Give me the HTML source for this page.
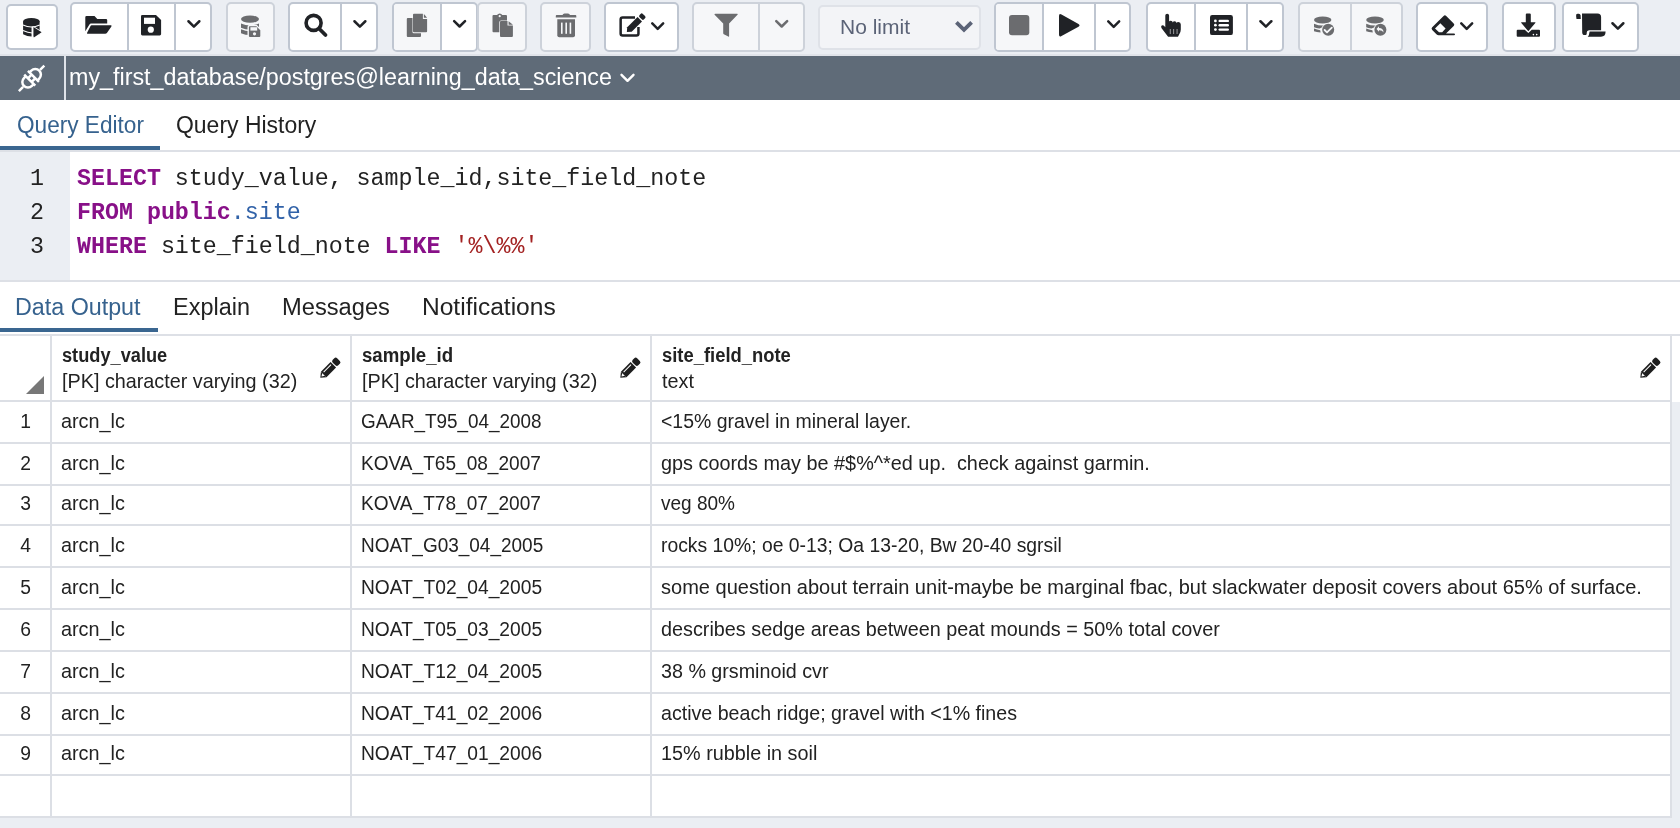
<!DOCTYPE html>
<html><head><meta charset="utf-8">
<style>
*{box-sizing:border-box;margin:0;padding:0}
html,body{width:1680px;height:828px;overflow:hidden;background:#ebeef3;font-family:"Liberation Sans",sans-serif;color:#222}
.abs{position:absolute}
#toolbar{position:absolute;left:0;top:0;width:1680px;height:54px;background:#ebeef3}
.tb{position:absolute;top:2px;height:50px;border:2px solid #bfc6d1;border-radius:5px;background:#fff;overflow:hidden}
.tb.dis{background:#f6f7f9;border-color:#cdd2da}
.sep{position:absolute;top:0;bottom:0;width:2px;background:#bfc6d1}
.tb.dis .sep{background:#cdd2da}
.tb svg{position:absolute}
#tbline{position:absolute;left:0;top:54px;width:1680px;height:2px;background:#e1e4ea}
#conn{position:absolute;left:0;top:56px;width:1680px;height:44px;background:#5f6b78}
#connsep{position:absolute;left:64px;top:56px;width:2px;height:44px;background:#dfe3e9}
#conntxt{position:absolute;left:69px;top:56px;height:44px;line-height:42px;font-size:23.3px;color:#fff;white-space:nowrap}
#tabs1{position:absolute;left:0;top:100px;width:1680px;height:52px;background:#fff}
.tab{position:absolute;font-size:23px;white-space:nowrap;color:#222;transform-origin:0 0}
.tab.act{color:#36628e}
.uline{position:absolute;height:4px;background:#3a6690}
.hline{position:absolute;left:0;width:1680px;height:2px;background:#dde0e6}
#gutter{position:absolute;left:0;top:152px;width:70px;height:128px;background:#ebeef3}
#editor{position:absolute;left:70px;top:152px;width:1610px;height:128px;background:#fff}
.ln{position:absolute;left:0;width:44px;text-align:right;font-family:"Liberation Mono",monospace;font-size:23.3px;color:#222}
.code{position:absolute;left:77px;font-family:"Liberation Mono",monospace;font-size:23.3px;color:#222;white-space:pre}
.kw{color:#881088;font-weight:bold}
.bl{color:#3162a8}
.st{color:#a32222}
#tabs2{position:absolute;left:0;top:282px;width:1680px;height:53px;background:#fff}
#grid{position:absolute;left:0;top:336px;width:1680px;height:482px;background:#fff}
.gh{position:absolute;left:0;height:2px;background:#dcdfe5}
.gv{position:absolute;width:2px;background:#dcdfe5}
.cell{position:absolute;transform-origin:0 0;font-size:19.3px;white-space:nowrap;color:#222}
.rn{position:absolute;left:0;width:51px;text-align:center;font-size:19.3px;color:#222}
.hn{position:absolute;font-size:20px;font-weight:bold;color:#222;white-space:nowrap;transform:scaleX(0.896);transform-origin:0 0}
.ht{position:absolute;font-size:19.8px;color:#222;white-space:nowrap}
</style></head><body>
<div id="root" style="position:absolute;left:0;top:0;width:1680px;height:828px;will-change:transform">
<div id="toolbar">
 <!-- 1 -->
 <div class="tb" style="left:6px;width:52px;top:4px;height:46px"></div>
 <!-- 2 -->
 <div class="tb" style="left:70px;width:142px"><div class="sep" style="left:54.5px"></div><div class="sep" style="left:102px"></div></div>
 <!-- 3 -->
 <div class="tb dis" style="left:226px;width:49px"></div>
 <!-- 4 -->
 <div class="tb" style="left:288px;width:90px"><div class="sep" style="left:50px"></div></div>
 <!-- 5 copy + dd -->
 <div class="tb" style="left:392px;width:86px;background:#fff"><div class="abs" style="left:0;top:0;width:46px;height:46px;background:#f6f7f9"></div><div class="sep" style="left:46px"></div></div>
 <div class="tb dis" style="left:477px;width:50px"></div>
 <!-- delete -->
 <div class="tb dis" style="left:540px;width:51px"></div>
 <!-- edit -->
 <div class="tb" style="left:604px;width:75px"></div>
 <!-- filter -->
 <div class="tb dis" style="left:692px;width:113px"><div class="sep" style="left:64px"></div></div>
 <!-- select -->
 <div class="abs" style="left:818px;top:4.5px;width:163px;height:45px;border:2px solid #dfe2e8;border-radius:5px;background:#f3f4f7"></div>
 <div class="abs" style="left:840px;top:14.9px;font-size:21px;color:#5b6377;white-space:nowrap">No limit</div>
 <!-- exec group -->
 <div class="tb" style="left:994px;width:137px"><div class="abs" style="left:0;top:0;width:46px;height:46px;background:#f6f7f9"></div><div class="sep" style="left:46px"></div><div class="sep" style="left:98px"></div></div>
 <!-- explain group -->
 <div class="tb" style="left:1146px;width:138px"><div class="sep" style="left:46px"></div><div class="sep" style="left:98px"></div></div>
 <!-- commit group -->
 <div class="tb dis" style="left:1298px;width:105px"><div class="sep" style="left:50px"></div></div>
 <!-- eraser -->
 <div class="tb" style="left:1416px;width:72px"></div>
 <!-- download -->
 <div class="tb" style="left:1502px;width:54px"></div>
 <!-- scroll -->
 <div class="tb" style="left:1562px;width:77px"></div>
</div>
<div id="tbline"></div>
<div id="conn"></div>
<div id="connsep"></div>
<div id="conntxt">my_first_database/postgres@learning_data_science</div>

<div id="tabs1">
 <div class="tab act" style="left:16.8px;top:11.5px;transform:scaleX(0.983)">Query Editor</div>
 <div class="tab" style="left:176.2px;top:11.5px;transform:scaleX(0.998)">Query History</div>
 <div class="uline" style="left:0;top:46px;width:160px"></div>
</div>
<div class="hline" style="top:150px"></div>
<div id="gutter"></div>
<div id="editor"></div>
<div class="ln" style="top:165.5px">1</div>
<div class="ln" style="top:199.5px">2</div>
<div class="ln" style="top:233.5px">3</div>
<div class="code" style="top:165.5px"><span class="kw">SELECT</span> study_value, sample_id,site_field_note</div>
<div class="code" style="top:199.5px"><span class="kw">FROM</span> <span class="kw">public</span><span class="bl">.site</span></div>
<div class="code" style="top:233.5px"><span class="kw">WHERE</span> site_field_note <span class="kw">LIKE</span> <span class="st">'%\%%'</span></div>
<div class="hline" style="top:280px"></div>

<div id="tabs2">
 <div class="tab act" style="left:15.4px;top:11.5px;transform:scaleX(1.012)">Data Output</div>
 <div class="tab" style="left:173.3px;top:11.5px;transform:scaleX(1.02)">Explain</div>
 <div class="tab" style="left:282px;top:11.5px;transform:scaleX(1.03)">Messages</div>
 <div class="tab" style="left:421.8px;top:11.5px;transform:scaleX(1.067)">Notifications</div>
 <div class="uline" style="left:0;top:46px;width:158px"></div>
</div>
<div class="hline" style="top:334px"></div>

<div id="grid">
<div class="gh" style="top:64px;width:1672px"></div>
<div class="gh" style="top:106px;width:1672px"></div>
<div class="gh" style="top:148px;width:1672px"></div>
<div class="gh" style="top:188px;width:1672px"></div>
<div class="gh" style="top:230px;width:1672px"></div>
<div class="gh" style="top:272px;width:1672px"></div>
<div class="gh" style="top:314px;width:1672px"></div>
<div class="gh" style="top:356px;width:1672px"></div>
<div class="gh" style="top:398px;width:1672px"></div>
<div class="gh" style="top:438px;width:1672px"></div>
<div class="gh" style="top:480px;width:1672px"></div>
<div class="gv" style="left:50px;top:0;height:482px"></div>
<div class="gv" style="left:350px;top:0;height:482px"></div>
<div class="gv" style="left:650px;top:0;height:482px"></div>
<div class="gv" style="left:1670px;top:0;height:482px"></div>
<div class="abs" style="left:1672px;top:66px;width:8px;height:426px;background:#ebeef3"></div>
<div class="hn" style="left:62px;top:8.0px;transform:scaleX(0.91)">study_value</div>
<div class="ht" style="left:62px;top:33.88px">[PK] character varying (32)</div>
<div class="hn" style="left:362px;top:8.0px;transform:scaleX(0.932)">sample_id</div>
<div class="ht" style="left:362px;top:33.88px">[PK] character varying (32)</div>
<div class="hn" style="left:662px;top:8.0px;transform:scaleX(0.92)">site_field_note</div>
<div class="ht" style="left:662px;top:33.88px">text</div>
<div class="rn" style="top:74.56px">1</div>
<div class="cell" style="left:61px;top:74.56px;transform:scaleX(1.028)">arcn_lc</div>
<div class="cell" style="left:361px;top:74.56px;transform:scaleX(0.9795)">GAAR_T95_04_2008</div>
<div class="cell" style="left:661px;top:74.56px;transform:scaleX(1.0086)">&lt;15% gravel in mineral layer.</div>
<div class="rn" style="top:116.86px">2</div>
<div class="cell" style="left:61px;top:116.86px;transform:scaleX(1.028)">arcn_lc</div>
<div class="cell" style="left:361px;top:116.86px;transform:scaleX(0.9891)">KOVA_T65_08_2007</div>
<div class="cell" style="left:661px;top:116.86px;transform:scaleX(1.0286)">gps coords may be #$%^*ed up.&nbsp; check against garmin.</div>
<div class="rn" style="top:156.96px">3</div>
<div class="cell" style="left:61px;top:156.96px;transform:scaleX(1.028)">arcn_lc</div>
<div class="cell" style="left:361px;top:156.96px;transform:scaleX(0.9891)">KOVA_T78_07_2007</div>
<div class="cell" style="left:661px;top:156.96px;transform:scaleX(0.9867)">veg 80%</div>
<div class="rn" style="top:198.76px">4</div>
<div class="cell" style="left:61px;top:198.76px;transform:scaleX(1.028)">arcn_lc</div>
<div class="cell" style="left:361px;top:198.76px;transform:scaleX(0.9845)">NOAT_G03_04_2005</div>
<div class="cell" style="left:661px;top:198.76px;transform:scaleX(1.0026)">rocks 10%; oe 0-13; Oa 13-20, Bw 20-40 sgrsil</div>
<div class="rn" style="top:240.76px">5</div>
<div class="cell" style="left:61px;top:240.76px;transform:scaleX(1.028)">arcn_lc</div>
<div class="cell" style="left:361px;top:240.76px;transform:scaleX(0.9957)">NOAT_T02_04_2005</div>
<div class="cell" style="left:661px;top:240.76px;transform:scaleX(1.0388)">some question about terrain unit-maybe be marginal fbac, but slackwater deposit covers about 65% of surface.</div>
<div class="rn" style="top:282.76px">6</div>
<div class="cell" style="left:61px;top:282.76px;transform:scaleX(1.028)">arcn_lc</div>
<div class="cell" style="left:361px;top:282.76px;transform:scaleX(0.9957)">NOAT_T05_03_2005</div>
<div class="cell" style="left:661px;top:282.76px;transform:scaleX(1.0273)">describes sedge areas between peat mounds = 50% total cover</div>
<div class="rn" style="top:324.76px">7</div>
<div class="cell" style="left:61px;top:324.76px;transform:scaleX(1.028)">arcn_lc</div>
<div class="cell" style="left:361px;top:324.76px;transform:scaleX(0.9957)">NOAT_T12_04_2005</div>
<div class="cell" style="left:661px;top:324.76px;transform:scaleX(1.0214)">38 % grsminoid cvr</div>
<div class="rn" style="top:366.76px">8</div>
<div class="cell" style="left:61px;top:366.76px;transform:scaleX(1.028)">arcn_lc</div>
<div class="cell" style="left:361px;top:366.76px;transform:scaleX(0.9957)">NOAT_T41_02_2006</div>
<div class="cell" style="left:661px;top:366.76px;transform:scaleX(1.0172)">active beach ridge; gravel with &lt;1% fines</div>
<div class="rn" style="top:406.86px">9</div>
<div class="cell" style="left:61px;top:406.86px;transform:scaleX(1.028)">arcn_lc</div>
<div class="cell" style="left:361px;top:406.86px;transform:scaleX(0.9957)">NOAT_T47_01_2006</div>
<div class="cell" style="left:661px;top:406.86px;transform:scaleX(1.0272)">15% rubble in soil</div>
</div>
<svg id="ov" width="1680" height="828" viewBox="0 0 1680 828" style="position:absolute;left:0;top:0;pointer-events:none">
<defs>
 <path id="chev" d="M0,0 L5.45,5.45 L10.9,0" fill="none" stroke-width="2.5" stroke-linecap="round" stroke-linejoin="round"/>
</defs>
<!-- 1 db+play -->
<g fill="#202226">
 <path d="M23.1,21.5 V34.2 Q31.4,38.6 39.6,34.2 V21.5Z"/>
 <ellipse cx="31.4" cy="21.5" rx="8.3" ry="3.4"/>
 <path d="M23,25.1 Q31.4,29 39.7,25.1 M23,30.4 Q28,32.7 32.3,33" fill="none" stroke="#fff" stroke-width="1.1"/>
 <path d="M32.3,26.5 V38.5" stroke="#fff" stroke-width="1.5"/>
 <path d="M33.3,26 L43.2,32.3 L33.3,38.6Z" fill="#fff"/>
 <path d="M33.6,27.6 Q33.6,27 34.2,27.4 L41.3,32 Q41.7,32.3 41.3,32.6 L34.2,37.2 Q33.6,37.6 33.6,37Z"/>
</g>
<!-- folder -->
<g fill="#202226">
 <path d="M86.5,16 H94.5 L97.3,18.9 H106 Q107.2,18.9 107.2,20.1 V23.6 H91.2 Q89.9,23.6 89.3,24.8 L85.3,31.3 V17.2 Q85.3,16 86.5,16Z"/>
 <path d="M91.7,25.3 H110.8 Q112,25.3 111.4,26.4 L106.9,33 Q106.3,33.8 105.2,33.8 H87.6 Q86.6,33.8 87.1,32.8 L90.4,26.2 Q90.8,25.3 91.7,25.3Z"/>
</g>
<!-- save -->
<g fill="#202226">
 <path d="M142.3,15 H156 L161.1,20.1 V34 Q161.1,35.4 159.7,35.4 H142.3 Q141,35.4 141,34 V16.3 Q141,15 142.3,15Z"/>
 <rect x="144" y="17.7" width="11" height="6.2" fill="#fff"/>
 <circle cx="150.8" cy="29.7" r="3.1" fill="#fff"/>
</g>
<use href="#chev" x="188.45" y="21.25" stroke="#202226"/>
<!-- db save disabled -->
<g fill="#6b6c6f">
 <ellipse cx="250" cy="19.1" rx="9" ry="3.6"/>
 <path d="M241,23.4 Q250,27.6 259,23.4 V27.8 Q250,31.8 241,27.8Z"/>
 <path d="M241,29.3 Q250,33.3 259,29.3 V33.2 Q250,37 241,33.2Z"/>
 <path d="M248.5,25.6 H256.6 L261,30 V36 Q261,37.6 259.4,37.6 H250 Q248.2,37.6 248.2,36 V27 Q248.2,25.6 249.6,25.6Z" stroke="#f6f7f9" stroke-width="1.4"/>
 <rect x="250.4" y="27.2" width="6.8" height="3.4" fill="#f6f7f9"/>
 <circle cx="254.5" cy="33.8" r="1.6" fill="#f6f7f9"/>
</g>
<!-- search -->
<g fill="none" stroke="#202226">
 <circle cx="313.6" cy="22.9" r="7.5" stroke-width="3.6"/>
 <path d="M319.5,29 L325.5,35" stroke-width="3.8" stroke-linecap="round"/>
</g>
<use href="#chev" x="354.45" y="21.25" stroke="#202226"/>
<!-- copy -->
<g fill="#6b6c6f">
 <path d="M407.8,18 H412.5 V32 Q412.5,33.3 413.8,33.3 H421 V36 Q421,37 420,37 H407.8 Q406.8,37 406.8,36 V19 Q406.8,18 407.8,18Z"/>
 <path d="M414,13.7 H422.9 V19 H427.1 V31.3 Q427.1,32.3 426.1,32.3 H414 Q413,32.3 413,31.3 V14.7 Q413,13.7 414,13.7Z"/>
 <path d="M423.9,13.9 L427.1,17.8 H423.9Z"/>
</g>
<use href="#chev" x="454.15" y="21.05" stroke="#202226"/>
<!-- paste -->
<g fill="#6b6c6f">
 <path d="M493.5,15 H497 Q498,13.5 499.7,13.5 Q501.4,13.5 502.3,15 H506 Q507,15 507,16 V20.5 H501 Q499.3,20.5 499.3,22.2 V32.3 H493.5 Q492.5,32.3 492.5,31.3 V16 Q492.5,15 493.5,15Z"/>
 <circle cx="499.7" cy="16.2" r="1.1" fill="#f6f7f9"/>
 <path d="M501,21 H507.5 V25.6 H512.9 V36 Q512.9,37 511.9,37 H501 Q500,37 500,36 V22 Q500,21 501,21Z"/>
 <path d="M508.6,21.2 L512.9,24.7 H508.6Z"/>
</g>
<!-- trash -->
<g fill="#6b6c6f">
 <path d="M562.5,15.1 Q563,13.4 564.5,13.4 H568 Q569.5,13.4 570,15.1 H575.5 Q576.3,15.1 576.3,15.9 V17.6 H555.8 V15.9 Q555.8,15.1 556.6,15.1Z"/>
 <path d="M557.3,19.3 H575 V35.2 Q575,37.2 573,37.2 H559.3 Q557.3,37.2 557.3,35.2Z"/>
 <rect x="561" y="22.6" width="1.6" height="11.2" fill="#f6f7f9"/>
 <rect x="565.4" y="22.6" width="1.6" height="11.2" fill="#f6f7f9"/>
 <rect x="569.6" y="22.6" width="1.6" height="11.2" fill="#f6f7f9"/>
</g>
<!-- edit -->
<path d="M635,17.45 H622.6 Q620.65,17.45 620.65,19.4 V33.5 Q620.65,35.45 622.6,35.45 H636.5 Q638.45,35.45 638.45,33.5 V27" fill="none" stroke="#202226" stroke-width="2.5"/>
<g transform="translate(629.45,29.5) rotate(-45)" fill="#202226">
 <path d="M-3.7,0 L0,-3.15 H14.6 V3.15 H0Z"/>
 <rect x="15.9" y="-3.15" width="4.6" height="6.3" rx="1.6"/>
</g>
<use href="#chev" x="652.25" y="23.45" stroke="#202226"/>
<!-- filter -->
<g fill="#6b6c6f">
 <path d="M715.5,13.7 H737 Q738.4,13.7 737.5,14.8 L729.1,23.6 V36.2 Q729.1,37 728.3,36.6 L723.8,34.2 Q723.2,33.8 723.2,33 V23.6 L714.6,14.8 Q713.9,13.7 715.5,13.7Z"/>
</g>
<use href="#chev" x="776.25" y="21.05" stroke="#6b6c6f"/>
<!-- select chevron -->
<path d="M956.4,22.3 L964,29.9 L971.6,22.3" fill="none" stroke="#5b6377" stroke-width="3.8" stroke-linecap="butt" stroke-linejoin="miter"/>
<!-- stop -->
<rect x="1009" y="15.1" width="20.3" height="20.2" rx="3" fill="#6b6c6f"/>
<!-- play -->
<path d="M1061.5,14.5 Q1059,13 1059,16 V34.5 Q1059,37.5 1061.5,36 L1078.5,26.8 Q1080.6,25.4 1078.5,24 Z" fill="#202226"/>
<use href="#chev" x="1108.25" y="21.35" stroke="#202226"/>
<!-- hand -->
<g fill="#202226">
 <path d="M1165.3,15.5 Q1165.3,13.8 1167.2,13.8 Q1169.1,13.8 1169.1,15.5 V21.6 Q1169.3,20.8 1170.8,20.8 Q1172.6,20.8 1172.8,22.4 Q1173,21.3 1174.6,21.3 Q1176.4,21.3 1176.6,23 Q1176.9,22 1178.4,22 Q1180.8,22 1180.8,24.5 V29.5 Q1180.8,31.8 1179.4,34 L1178,36.8 H1168.1 L1161.6,28.2 Q1160.5,26.6 1161.7,25.6 Q1163,24.6 1164.2,25.9 L1165.3,27.2Z"/>
 <rect x="1169.8" y="29" width="0.9" height="5" fill="#fff" opacity="0.6"/>
 <rect x="1173.2" y="29" width="0.9" height="5" fill="#fff" opacity="0.6"/>
 <rect x="1176.6" y="29" width="0.9" height="5" fill="#fff" opacity="0.6"/>
</g>
<!-- list -->
<g>
 <rect x="1210" y="15.1" width="22.9" height="20" rx="2.2" fill="#202226"/>
 <g fill="#fff">
  <circle cx="1215.4" cy="20.9" r="1.4"/><circle cx="1215.4" cy="25.2" r="1.4"/><circle cx="1215.4" cy="29.6" r="1.4"/>
  <rect x="1218.5" y="19.7" width="10.5" height="2.4" rx="1.2"/>
  <rect x="1218.5" y="24" width="10.5" height="2.4" rx="1.2"/>
  <rect x="1218.5" y="28.4" width="10.5" height="2.4" rx="1.2"/>
 </g>
</g>
<use href="#chev" x="1260.45" y="21.25" stroke="#202226"/>
<!-- commit -->
<g fill="#6b6c6f">
 <ellipse cx="1322.7" cy="20" rx="8.7" ry="3.4"/>
 <path d="M1314,23.7 Q1322.7,27.5 1331.4,23.7 V25 Q1326,27.3 1322,27.6 L1319.5,28.6 Q1316,28 1314,27.2Z"/>
 <path d="M1314,28.5 Q1317,29.8 1320.2,30.2 L1320.6,32.4 Q1316.5,32 1314,31.2Z"/>
 <circle cx="1328.2" cy="29.8" r="6.9" fill="#f6f7f9"/>
 <circle cx="1328.2" cy="29.8" r="6"/>
 <path d="M1324.6,30 L1327,32.4 L1331.8,27.6" fill="none" stroke="#f6f7f9" stroke-width="1.8" stroke-linecap="round" stroke-linejoin="round"/>
</g>
<!-- rollback -->
<g fill="#6b6c6f">
 <ellipse cx="1375" cy="20" rx="8.8" ry="3.4"/>
 <path d="M1366.2,23.7 Q1375,27.5 1383.8,23.7 V25 Q1378,27.3 1374,27.6 L1371.5,28.6 Q1368,28 1366.2,27.2Z"/>
 <path d="M1366.2,28.5 Q1369,29.8 1372.4,30.2 L1372.8,32.4 Q1368.5,32 1366.2,31.2Z"/>
 <circle cx="1380.4" cy="29.8" r="6.9" fill="#f6f7f9"/>
 <circle cx="1380.4" cy="29.8" r="6"/>
 <path d="M1376.5,29 L1379,26.3 V27.9 Q1383.5,27.9 1383.5,32.4 Q1382.5,30.2 1379,30.3 V31.8Z" fill="#f6f7f9"/>
</g>
<!-- eraser -->
<g fill="#202226">
 <path d="M1443.6,16 Q1444.9,14.7 1446.2,16 L1453.7,23.5 Q1455,24.8 1453.7,26.1 L1446,33.6 H1454 Q1455,33.6 1455,34.4 Q1455,35.2 1454,35.2 H1438.6 Q1437.5,35.2 1436.7,34.4 L1432.2,29.9 Q1430.9,28.6 1432.2,27.3Z"/>
 <path d="M1440.3,23.3 L1445.6,28.6 L1442.2,32.3 H1439 L1435,28.4Z" fill="#fff"/>
</g>
<use href="#chev" x="1461.25" y="23.45" stroke="#202226"/>
<!-- download -->
<g fill="#202226">
 <path d="M1526.8,13.4 H1529.8 Q1530.8,13.4 1530.8,14.4 V22.2 H1534.9 Q1536,22.2 1535.3,23 L1528.3,31.2 L1521.3,23 Q1520.6,22.2 1521.7,22.2 H1525.8 V14.4 Q1525.8,13.4 1526.8,13.4Z"/>
 <path d="M1517.7,29.7 H1524.8 L1528.3,33 L1531.8,29.7 H1539 Q1540,29.7 1540,30.7 V35.8 Q1540,36.8 1539,36.8 H1517.7 Q1516.7,36.8 1516.7,35.8 V30.7 Q1516.7,29.7 1517.7,29.7Z"/>
 <circle cx="1533.4" cy="34.6" r="0.8" fill="#fff"/><circle cx="1536.7" cy="34.6" r="0.8" fill="#fff"/>
</g>
<!-- scroll -->
<g fill="#202226">
 <path d="M1577.5,13.8 Q1575.8,13.8 1576.1,16 L1576.5,19 H1580.8 L1580.6,15.3 Q1580.3,13.8 1578.8,13.8Z"/>
 <path d="M1582,13.4 H1597.5 Q1601.1,13.4 1601.1,17 V30.3 H1589 Q1586.7,30.3 1586.7,32.8 V34.2 Q1586,35.1 1584.8,35.1 Q1582.2,35 1582.2,32.5Z"/>
 <path d="M1589.6,31.6 H1605.6 Q1605.6,36.8 1601,36.8 H1587.7 Q1589.2,35.6 1589.2,33.5Z"/>
</g>
<use href="#chev" x="1612.45" y="23.25" stroke="#202226"/>
<!-- plug -->
<g transform="translate(31.6,78.3) rotate(-45)" fill="none" stroke="#fff" stroke-width="2.5">
 <path d="M-18,0 H-12 M12,0 H18"/>
 <path d="M-2.6,-7.8 V7.8 M2.6,-7.8 V7.8"/>
 <path d="M-2.6,-5.6 H-5.2 A5.6,5.6 0 0 0 -5.2,5.6 H-2.6"/>
 <path d="M2.6,-5.6 H5.2 A5.6,5.6 0 0 1 5.2,5.6 H2.6"/>
 <path d="M-2.6,-2.6 H2.6 M-2.6,2.6 H2.6"/>
</g>
<!-- conn chevron -->
<path d="M621.5,74.8 L627.5,80.8 L633.5,74.8" fill="none" stroke="#fff" stroke-width="2.4" stroke-linecap="round" stroke-linejoin="round"/>
<!-- grid corner triangle -->
<path d="M44,376 V394 H26Z" fill="#777"/>
<!-- pencils -->
<g id="pen" fill="#1e1e1e">
 <g transform="translate(320.3,377.8) rotate(-45)">
  <path d="M0,0 L4.8,-3.9 V3.9Z"/>
  <path d="M1.8,-0.2 L4.8,-2 V1.8Z" fill="#fff"/>
  <rect x="4.8" y="-3.9" width="13.6" height="7.8"/>
  <rect x="6.4" y="-2.2" width="10.5" height="1" fill="#fff"/>
  <rect x="19.5" y="-3.9" width="6.2" height="7.8" rx="2"/>
 </g>
</g>
<use href="#pen" x="300"/>
<use href="#pen" x="1320"/>
</svg>
</div>
</body></html>
